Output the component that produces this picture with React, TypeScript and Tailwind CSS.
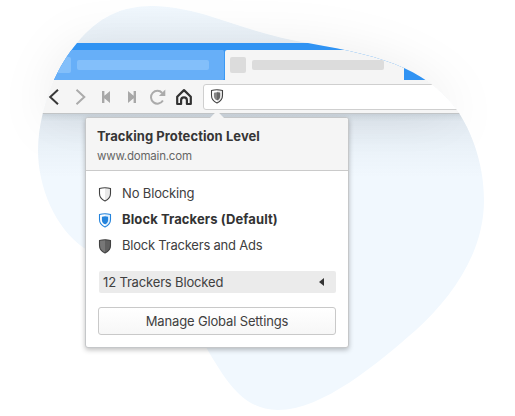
import React from "react";

const BLOB =
  "M152 6C170 6 187 10 203 14C238 25 270 37 308 43C348 50 380 57 404 68C428 79 446 94 459 113C474 136 484 168 484 200C484 253 452 297 416 330C378 363 323 410 278 410C245 410 228 384 210 354C190 315 150 290 84 248C55 228 38 187 38 150C38 124 46 99 54 80C60 67 67 55 77 43C98 17 122 6 152 6Z";

const SHIELD = "M6.5 .8C8.6 .8 10.4 1.1 12 1.6V6.5C12 10.4 9.6 12.6 6.5 13.9C3.4 12.6 1 10.4 1 6.5V1.6C2.6 1.1 4.4 .8 6.5 .8Z";
const INNER = "M6.5 3.2C7.6 3.2 8.6 3.4 9.6 3.7V6.9C9.6 9 8.3 10.4 6.5 11.3C4.7 10.4 3.4 9 3.4 6.9V3.7C4.4 3.4 5.4 3.2 6.5 3.2Z";

type ShieldKind = "empty" | "blue" | "solid" | "gray";

function Shield({ kind }: { kind: ShieldKind }) {
  const stroke = kind === "blue" ? "#2383dc" : "#414141";
  const fill = kind === "solid" ? "#777" : "#fff";
  const shade = kind === "solid" ? "#606060" : kind === "blue" ? "#e3f1fd" : "#e9e9e9";
  return (
    <svg className="shrink-0" width="14" height="15" viewBox="-0.5 0 14 15">
      <path d={SHIELD} fill={fill} />
      <path d="M6.5 .8C8.6 .8 10.4 1.1 12 1.6V6.5C12 10.4 9.6 12.6 6.5 13.9Z" fill={shade} />
      <path d={SHIELD} fill="none" stroke={stroke} strokeWidth="1.1" />
      {kind === "blue" && <path d={INNER} fill="#2383dc" />}
      {kind === "gray" && (
        <>
          <path d={INNER} fill="#858585" />
          <path d="M6.5 3.2C7.6 3.2 8.6 3.4 9.6 3.7V6.9C9.6 9 8.3 10.4 6.5 11.3Z" fill="#686868" />
        </>
      )}
    </svg>
  );
}

function NavIcons() {
  return (
    <div className="flex h-full w-[203px] shrink-0 items-center pl-[46px]">
      <svg className="w-[26px] shrink-0" height="21" viewBox="0 0 26 21" fill="none" stroke="#383838" strokeWidth="2">
        <path d="M12 3.7L4.2 11L12 18.3" />
      </svg>
      <svg className="w-[26px] shrink-0" height="21" viewBox="0 0 26 21" fill="none" stroke="#ababab" strokeWidth="2">
        <path d="M4.5 3.7L12.3 11L4.5 18.3" />
      </svg>
      <svg className="w-[26px] shrink-0" height="21" viewBox="0 0 26 21" fill="#a8a8a8">
        <path d="M4 5H6.4V9.8L12 5V17L6.4 12.2V17H4Z" />
      </svg>
      <svg className="w-[26px] shrink-0" height="21" viewBox="0 0 26 21" fill="#a8a8a8">
        <path d="M12 5H9.6V9.8L4 5V17L9.6 12.2V17H12Z" />
      </svg>
      <svg className="w-[26px] shrink-0" height="21" viewBox="0 0 26 21" fill="none" stroke="#ababab" strokeWidth="2">
        <path d="M12.9 14.6A6.4 6.4 0 1 1 12.2 7" />
        <path d="M15.3 3.6V10H8.9Z" fill="#ababab" stroke="none" />
      </svg>
      <svg className="w-[22px] shrink-0" height="21" viewBox="0 0 22 21" fill="none" stroke="#333" strokeWidth="2.2" strokeLinejoin="round">
        <path d="M1.2 10.8L8 4.1L14.8 10.8V18H10.9V14.2C10.9 12.4 9.7 11.4 8 11.4S5.1 12.4 5.1 14.2V18H1.2Z" />
      </svg>
    </div>
  );
}

function BrowserWindow() {
  return (
    <div className="[filter:drop-shadow(0_1px_24px_rgba(0,0,0,0.07))]">
      <div className="h-[416px] w-[515px] [clip-path:path('M152_6C170_6_187_10_203_14C238_25_270_37_308_43C348_50_380_57_404_68C428_79_446_94_459_113C474_136_484_168_484_200C484_253_452_297_416_330C378_363_323_410_278_410C245_410_228_384_210_354C190_315_150_290_84_248C55_228_38_187_38_150C38_124_46_99_54_80C60_67_67_55_77_43C98_17_122_6_152_6Z')]">
        <div className="h-[43px] bg-linear-to-b from-transparent to-[#3446570c]" />
        <div className="flex h-[37px] bg-[#3093f3] pt-[7px]">
          <div className="flex w-[225px] items-center gap-[6px] rounded-r-[2px] border-r border-[#3b99f4] bg-[#67aff8] pl-[55px]">
            <div className="size-4 rounded-[2px] bg-[#83bffa]" />
            <div className="h-[10px] w-[132px] rounded-[2px] bg-[#83bffa]" />
          </div>
          <div className="flex w-[179px] items-center gap-[6px] rounded-t-[2px] bg-[#f5f5f5] pl-[5px]">
            <div className="size-4 rounded-[2px] bg-[#dcdcdc]" />
            <div className="h-[10px] w-[132px] rounded-[2px] bg-[#dcdcdc]" />
          </div>
        </div>
        <div className="flex h-[34px] items-center border-b border-[#c1c4c6] bg-[#f5f5f5]">
          <NavIcons />
          <div className="flex h-[26px] flex-1 items-center rounded-l-[3px] border border-[#cfcfcf] bg-white pl-[6px]">
            <Shield kind="gray" />
          </div>
        </div>
        <div className="h-[7px] bg-linear-to-b from-[#34465718] to-transparent" />
        <div className="-mt-[7px] h-[64px] bg-linear-to-b from-[#34465718] via-[#34465709] to-transparent" />
      </div>
    </div>
  );
}

function TrackingPopup() {
  return (
    <div className="absolute left-[85px] top-[117px] flex h-[231px] w-[264px] flex-col rounded-[3px] border border-[#c5c7c9] bg-white text-[13px] text-[#404040] shadow-[0_2px_5px_rgba(0,0,0,0.25)]">
      <svg className="absolute left-[122px] top-[-7px]" width="18" height="8" viewBox="0 0 18 8">
        <path d="M1 8L7.6 1.3Q9 0 10.4 1.3L17 8Z" fill="#f5f5f5" />
      </svg>
      <div className="h-[53px] shrink-0 rounded-t-[2px] border-b border-[#cacaca] bg-[#f5f5f5] pl-[11px] pt-[9px]">
        <div className="text-[13px] font-bold leading-[19px] tracking-[0.07px] text-[#363636]">Tracking Protection Level</div>
        <div className="text-[11.5px] leading-[20px] tracking-[-0.2px] text-[#666]">www.domain.com</div>
      </div>
      <div className="flex flex-1 flex-col pl-3 pr-3 pt-[10px]">
        <div className="flex h-[26px] items-center gap-[10px]"><Shield kind="empty" /><span className="tracking-[-0.15px]">No Blocking</span></div>
        <div className="flex h-[26px] items-center gap-[10px]"><Shield kind="blue" /><span className="font-bold tracking-[0.1px] text-[#333]">Block Trackers (Default)</span></div>
        <div className="flex h-[26px] items-center gap-[10px]"><Shield kind="solid" /><span className="tracking-[-0.22px]">Block Trackers and Ads</span></div>
        <div className="ml-px mt-[12px] flex h-[22px] items-center justify-between rounded-[2px] bg-[#ebebeb] pl-1 pr-[12px]">
          <span className="pt-px tracking-[-0.16px]">12 Trackers Blocked</span>
          <svg width="5" height="8" viewBox="0 0 5 8"><path d="M5 0V8L0 4Z" fill="#333" /></svg>
        </div>
        <button className="mt-[14px] h-[28px] rounded-[3px] border border-[#c9c9c9] bg-linear-to-b from-white to-[#f7f7f7] pt-px tracking-[-0.15px]">Manage Global Settings</button>
      </div>
    </div>
  );
}

export default function App() {
  return (
    <main className="relative h-[416px] w-[515px] overflow-hidden bg-white font-[Inter,'Liberation_Sans',sans-serif]">
      <svg className="absolute inset-0" width="515" height="416" viewBox="0 0 515 416">
        <path d={BLOB} fill="#f1f8fe" />
      </svg>
      <BrowserWindow />
      <TrackingPopup />
    </main>
  );
}
